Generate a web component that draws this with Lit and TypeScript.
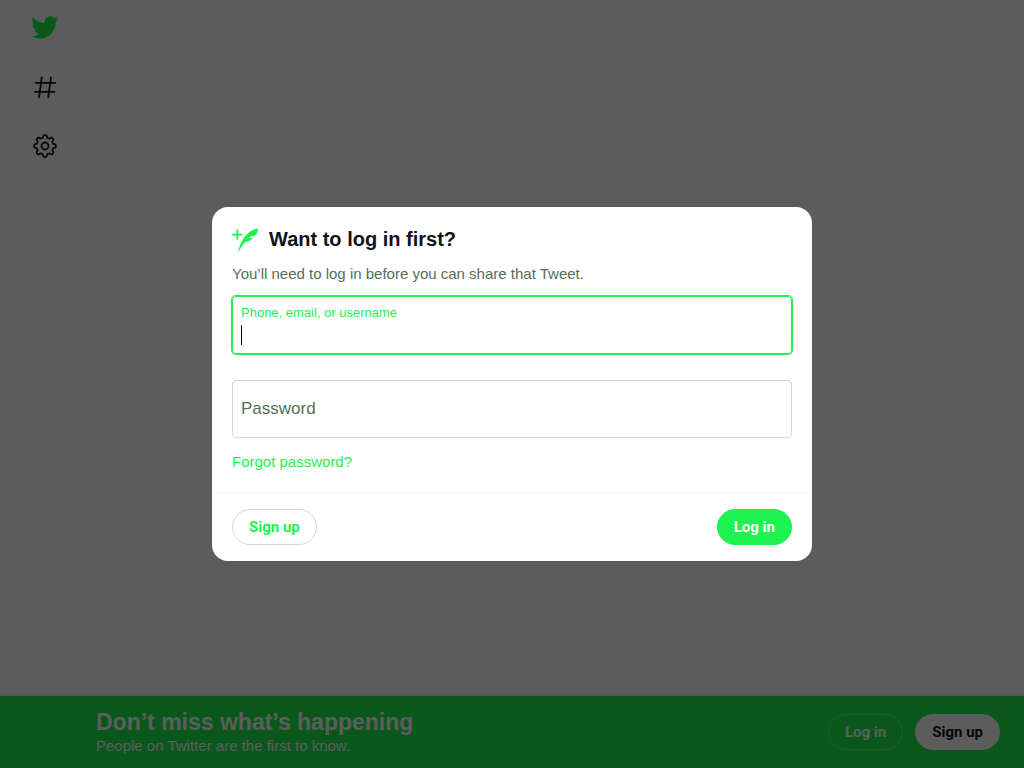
import { LitElement, html, css, svg } from "lit";
import { customElement } from "lit/decorators.js";

/** Outline of a cog with eight soft teeth, centred in a 26 unit box. */
function cogPath(): string {
  const steps = 160;
  const points: string[] = [];
  for (let i = 0; i < steps; i++) {
    const a = (i / steps) * Math.PI * 2;
    const r = 9.6 + 1.3 * Math.tanh(2 * Math.cos(8 * a));
    points.push(`${(13 + r * Math.cos(a)).toFixed(2)} ${(13 + r * Math.sin(a)).toFixed(2)}`);
  }
  return `M${points.join("L")}Z`;
}

const bird = svg`<path d="M23.643 4.937c-.835.37-1.732.62-2.675.733.962-.576 1.7-1.49 2.048-2.578-.9.534-1.897.922-2.958 1.13-.85-.904-2.06-1.47-3.4-1.47-2.572 0-4.658 2.086-4.658 4.66 0 .364.042.718.12 1.06-3.873-.195-7.304-2.05-9.602-4.868-.4.69-.63 1.49-.63 2.342 0 1.616.823 3.043 2.072 3.878-.764-.025-1.482-.234-2.11-.583v.06c0 2.257 1.605 4.14 3.737 4.568-.392.106-.803.162-1.227.162-.3 0-.593-.028-.877-.082.593 1.85 2.313 3.198 4.352 3.234-1.595 1.25-3.604 1.995-5.786 1.995-.376 0-.747-.022-1.112-.065 2.062 1.323 4.51 2.093 7.14 2.093 8.57 0 13.255-7.098 13.255-13.254 0-.2-.005-.402-.014-.602.91-.658 1.7-1.477 2.323-2.41z"/>`;

const feather = svg`<path d="M8.8 7.2H5.6V3.9c0-.4-.3-.8-.8-.8s-.7.4-.7.8v3.3H.8c-.4 0-.8.3-.8.8s.3.8.8.8h3.3v3.3c0 .4.3.8.8.8s.8-.3.8-.8V8.7H9c.4 0 .8-.3.8-.8s-.5-.7-1-.7zm15-4.9v-.1h-.1c-.1 0-9.2 1.2-14.4 11.7-3.8 7.6-3.6 9.9-3.3 9.9.3.1 3.4-6.5 6.7-9.2 5.2-1.1 6.6-3.6 6.6-3.6s-1.5.2-2.1.2c-.8 0-1.4-.2-1.7-.3 1.3-1.2 2.4-1.5 3.5-1.7.9-.2 1.8-.4 3-1.2 2.2-1.6 1.9-5.5 1.8-5.7z"/>`;

@customElement("side-nav")
class SideNav extends LitElement {
  static styles = css`
    :host { display: block; }
    .nav { display: flex; flex-direction: column; align-items: flex-start; gap: 8px; padding: 2px 0 0 19px; }
    .item { display: flex; align-items: center; justify-content: center; width: 51px; height: 51px; color: #0f1419; }
    .brand { color: #1df24f; }
    .line { width: 26px; height: 26px; fill: none; stroke: currentColor; stroke-width: 1.8; stroke-linecap: round; stroke-linejoin: round; }
    .solid { width: 29px; height: 29px; fill: currentColor; }
  `;

  render() {
    return html`
      <nav class="nav" aria-label="Primary">
        <a class="item brand" href="#home" aria-label="Twitter">
          <svg class="solid" viewBox="0 0 24 24">${bird}</svg>
        </a>
        <a class="item" href="#explore" aria-label="Explore">
          <svg class="line" viewBox="0 0 26 26"><path d="M9.8 3.3 7 23.3M19 3.3l-2.8 20M3.8 8.8h19.6M2.9 17.8h19.6" /></svg>
        </a>
        <a class="item" href="#settings" aria-label="Settings">
          <svg class="line" viewBox="0 0 26 26"><path d=${cogPath()} /><circle cx="13" cy="13" r="3.5" /></svg>
        </a>
      </nav>
    `;
  }
}

@customElement("signup-bar")
class SignupBar extends LitElement {
  static styles = css`
    :host { display: block; }
    .bar { display: flex; align-items: center; justify-content: space-between; gap: 24px; box-sizing: border-box; min-height: 72px; padding: 8px 24px 8px 96px; background: #1df24f; color: #fff; }
    .title { margin: 0; font-size: 23px; line-height: 28px; font-weight: 700; }
    .text { margin: 0; font-size: 15px; line-height: 20px; }
    .actions { display: flex; gap: 12px; flex: none; }
    .pill { height: 36px; padding: 0 16px; border: 1px solid #fff; border-radius: 18px; background: #fff; color: #0f1419; font-family: Roboto, sans-serif; font-size: 15px; font-weight: 700; }
    .ghost { background: transparent; border-color: #5df581; color: #fff; }
  `;

  render() {
    return html`
      <section class="bar">
        <div>
          <h2 class="title">Don’t miss what’s happening</h2>
          <p class="text">People on Twitter are the first to know.</p>
        </div>
        <div class="actions">
          <button class="pill ghost" type="button">Log in</button>
          <button class="pill" type="button">Sign up</button>
        </div>
      </section>
    `;
  }
}

@customElement("login-dialog")
class LoginDialog extends LitElement {
  static styles = css`
    :host { display: block; width: 600px; max-width: 100%; }
    .card { overflow: hidden; border-radius: 16px; background: #fff; color: #0f1419; }
    .body { padding: 19px 20px 20px; }
    .heading { display: flex; align-items: center; gap: 11px; }
    .feather { width: 26px; height: 26px; fill: #1df24f; }
    .title { margin: 0; font-size: 20px; line-height: 24px; font-weight: 700; }
    .text { margin: 12px 0; font-size: 15px; line-height: 20px; color: #536f5b; }
    .field { position: relative; display: flex; flex-direction: column; box-sizing: border-box; height: 58px; border: 1px solid #cfd9d2; border-radius: 4px; color: #536f5b; }
    .field + .field { margin-top: 26px; }
    .focused { border-color: #1df24f; box-shadow: 0 0 0 1px #1df24f; color: #1df24f; }
    .label { padding: 8px 8px 0; font-size: 13px; line-height: 16px; }
    .large { position: absolute; inset: 0; padding: 16px 8px; font-size: 17px; line-height: 24px; pointer-events: none; }
    .row { display: flex; align-items: center; flex: 1; padding: 0 8px 4px; }
    .caret { width: 1px; height: 20px; background: #000; }
    .input { flex: 1; min-width: 0; height: 24px; padding: 0; border: 0; outline: 0; background: transparent; color: #0f1419; font: inherit; font-size: 17px; caret-color: transparent; }
    .forgot { display: inline-block; margin-top: 14px; font-size: 15px; line-height: 20px; color: #1df24f; text-decoration: none; }
    .footer { display: flex; justify-content: space-between; padding: 16px 20px; border-top: 1px solid #eff4f0; }
    .pill { height: 36px; padding: 0 16px; border: 1px solid #cfd9d2; border-radius: 18px; background: #fff; color: #1df24f; font-family: Roboto, sans-serif; font-size: 15px; font-weight: 700; }
    .primary { border-color: #1df24f; background: #1df24f; color: #fff; }
  `;

  render() {
    return html`
      <form class="card" role="dialog" aria-labelledby="title">
        <div class="body">
          <div class="heading">
            <svg class="feather" viewBox="0 0 24 24" aria-hidden="true">${feather}</svg>
            <h1 class="title" id="title">Want to log in first?</h1>
          </div>
          <p class="text">You’ll need to log in before you can share that Tweet.</p>
          <div class="field focused">
            <label class="label" for="user">Phone, email, or username</label>
            <div class="row"><span class="caret"></span><input class="input" id="user" type="text" /></div>
          </div>
          <div class="field">
            <label class="large" for="password">Password</label>
            <div class="row"><input class="input" id="password" type="password" /></div>
          </div>
          <a class="forgot" href="#forgot">Forgot password?</a>
        </div>
        <div class="footer">
          <button class="pill" type="button">Sign up</button>
          <button class="pill primary" type="button">Log in</button>
        </div>
      </form>
    `;
  }
}

@customElement("app-root")
class AppRoot extends LitElement {
  static styles = css`
    :host { display: block; font-family: "Liberation Sans", Arial, sans-serif; }
    .page { display: flex; flex-direction: column; justify-content: space-between; min-height: 100vh; background: #fff; }
    .bar { box-shadow: 0 0 4px rgba(0, 0, 0, 0.2); }
    .overlay { position: fixed; inset: 0; display: flex; align-items: center; justify-content: center; background: rgba(0, 0, 0, 0.64); }
  `;

  render() {
    return html`
      <div class="page">
        <side-nav></side-nav>
        <signup-bar class="bar"></signup-bar>
      </div>
      <div class="overlay"><login-dialog></login-dialog></div>
    `;
  }
}
